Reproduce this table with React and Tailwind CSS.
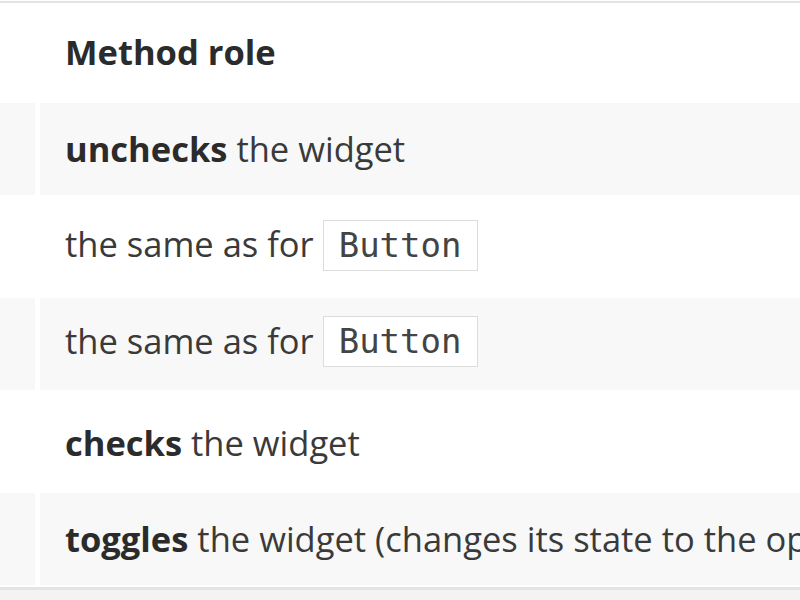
export default function App() {
  const font = { fontFamily: '"Open Sans", sans-serif' };
  const Code = ({ children }) => (
    <span className="inline-block border border-[#dcdcdc] bg-white px-[15px] h-[51px] leading-[49px] mb-[6px] text-[34px] text-[#444] align-middle" style={{ fontFamily: '"DejaVu Sans Mono", monospace' }}>
      {children}
    </span>
  );
  const rows = [
    { gray: true, content: <><b className="font-bold text-[#2b2b2b]">unchecks</b> the widget</> },
    { gray: false, content: <>the same as for <Code>Button</Code></> },
    { gray: true, content: <>the same as for <Code>Button</Code></> },
    { gray: false, content: <><b className="font-bold text-[#2b2b2b]">checks</b> the widget</> },
    { gray: true, content: <><b className="font-bold text-[#2b2b2b]">toggles</b> the widget (changes its state to the opposite)</> },
  ];
  return (
    <div className="w-[800px] h-[600px] overflow-hidden bg-[#f3f3f3] flex flex-col text-[34.5px] text-[#3a3a3a]" style={font}>
      <div className="bg-white pt-[1px] flex flex-col">
        <div className="h-[2px] bg-[#e4e4e4]" />
        <div className="h-[100px] flex items-center pl-[65px] pb-[2px] font-bold text-[#2b2b2b] whitespace-nowrap">Method role</div>
        {rows.map((r, i) => (
          <div key={i} className={`flex gap-[5px] ${r.gray ? 'h-[92px] mb-[2px]' : 'h-[101px]'}`}>
            <div className={`w-[35px] shrink-0 ${r.gray ? 'bg-[#f8f8f8]' : ''}`} />
            <div className={`flex-1 min-w-0 flex items-center pl-[25px] whitespace-nowrap overflow-hidden ${r.gray ? 'bg-[#f8f8f8]' : ''}`}>
              <span>{r.content}</span>
            </div>
          </div>
        ))}
      </div>
      <div className="h-[3px] bg-[#e4e4e4]" />
    </div>
  );
}
